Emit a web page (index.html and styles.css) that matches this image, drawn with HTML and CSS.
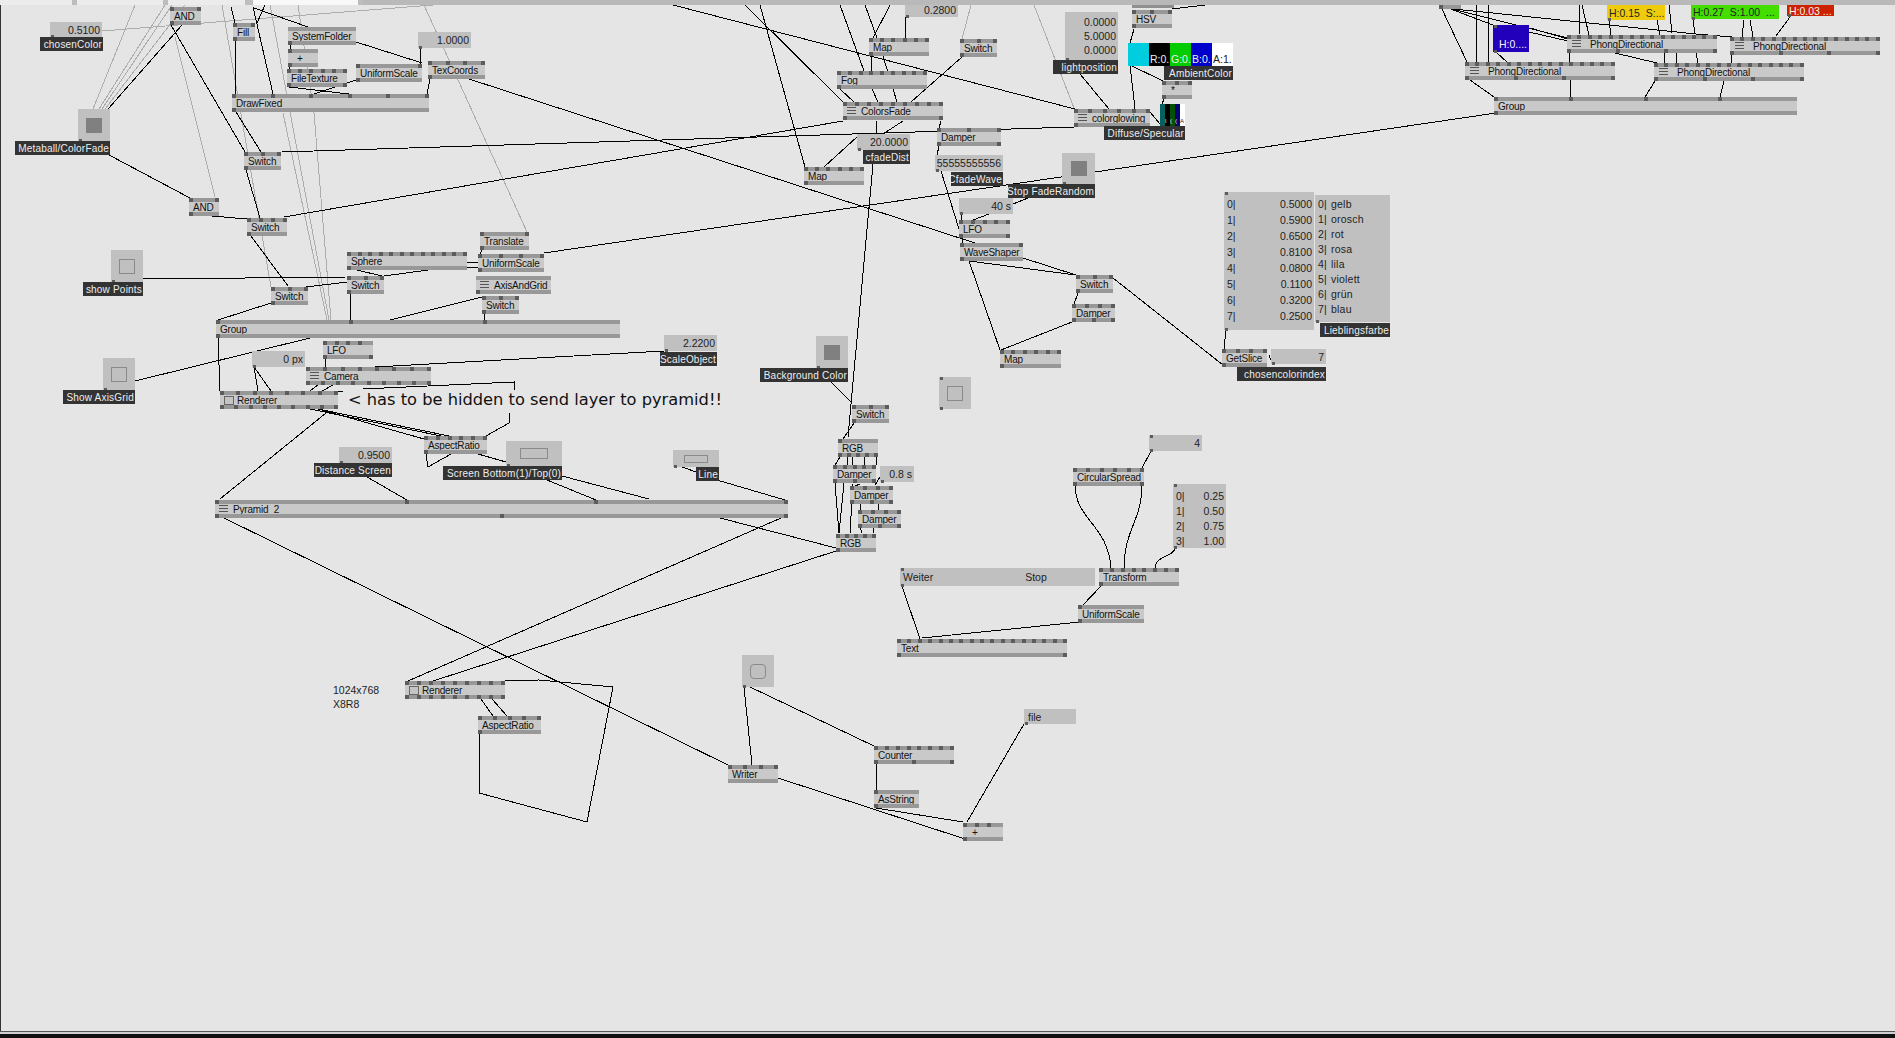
FILE: index.html
```html
<!DOCTYPE html>
<html lang="de">
<head>
<meta charset="utf-8">
<title>vvvv patch</title>
<link rel="stylesheet" href="styles.css">
</head>
<body>
<div class="window">
  <div class="strip">
    <span class="seg s1"></span><span class="tick"></span><span class="seg s2"></span><span class="tick"></span><span class="seg s3"></span><span class="tick t3"></span><span class="seg s4"></span><span class="tick"></span><span class="rest"></span>
  </div>
  <main class="patch">
    <div class="origin">
      <svg class="wires" width="1895" height="1038" viewBox="0 0 1895 1038">
        <path class="soft" d="M93 109L135 5M99 109L165 5M102 109L172 5M105 109L185 5M102 31L433 5M175 37L215 197M283 113L327 320M270 5L329 320M298 5L314 113L331 320M222 5L271 287M424 5L527 232M1034 5L1074 108M971 5L962 39"/>
        <path class="hard" d="M171 25L245 152M182 25L108 109M231 7L235 23M253 7L273 94M265 5L257 23M254 8L308 27M235 41V94M356 42L422 63M290 45V49M290 67L289 69M420 48V64M430 79L427 94M469 79L975 243M289 87L349 94M356 80L314 94M236 112L261 152M282 152L1074 127M246 170L260 218M109 155L190 198M212 216L247 219M284 217L843 121M251 236L288 286M143 279L347 277M306 287L347 282M357 270L382 276M428 270L384 276M467 263L478 262M467 268L478 267M482 250L480 254M544 253L1496 113M350 294L351 320M271 303L218 320M482 297L390 320M484 314V320M218 338L220 391M135 381L310 338M254 367L258 391M254 367L271 391M325 358V367M375 367L664 351M318 385L310 391M333 385L322 391M338 391H343M363 389L514 382V390M509 413V423L486 436M322 410L424 439M310 409L441 436M318 409L449 436M326 413L220 499M426 454L428 467L451 454M478 454L506 462M367 477L407 500M547 480L596 500M562 476L649 499M224 518L728 765M781 518L408 681M720 518L836 548M836 551L433 681M717 480L785 500M682 467L696 472M831 382L852 403M873 164L848 437M854 423L843 439M840 457L835 465M847 457V465M852 457V465M864 457V465M876 457V465M835 483L839 533M844 483L839 533M852 500L850 533M860 527L862 533M873 527V533M860 500V510M878 500V510M852 484V486M860 484L855 486M880 477L875 485M1113 278L1223 365M1226 330L1224 349M1269 355L1272 363M969 261L1000 350M1072 322L1001 350M969 261L1076 275M1023 258L1076 275M1078 293L1074 304M961 214V220M989 214L973 220M1028 198L1013 204M941 171L959 229M939 146L937 155M941 121L939 128M962 238V243M877 121L876 134M903 121L883 134M857 137L824 167M760 5L805 167M745 5L843 102M673 5L1075 109M840 5L864 71M865 5L877 38M890 5L873 38M906 17L905 38M871 56V71M883 56L897 102M840 89L854 102M872 89L878 102M962 57L911 102M1080 74L1109 109M1130 65L1135 109M1132 66L1163 81M1134 29L1130 43M1164 99L1162 104M1150 112L1160 124M1172 9L1205 5M1441 7L1467 62M1476 5V62M1488 5V62M1444 7L1568 38M1444 8L1696 34L1732 37M1448 8L1493 25M1580 5L1579 35M1582 5L1589 35M1609 20L1611 35M1657 20L1660 35M1669 5L1672 33M1693 20L1695 34M1744 20L1742 37M1750 20L1753 37M1790 17L1776 36M1530 28L1568 39M1529 32L1568 41M1497 53L1507 62M1570 53L1569 62M1615 53L1657 63M1664 53L1665 63M1676 53L1677 63M1696 53L1698 63M1732 55L1731 63M1470 80L1494 97M1570 80V97M1655 81L1645 97M1724 81L1720 97M1075 486C1076 520 1108 525 1111 568M1142 486C1142 520 1124 530 1124 568M1151 451L1142 468M1175 548C1175 556 1155 556 1155 568M902 586L920 639M1080 622L922 638M1101 586L1083 605M505 681L539 680L613 687L587 822L479 793V734M481 699L493 716M492 699L507 716M744 687L752 765M750 687L874 746M876 764V790M876 808L963 822M778 778L965 839M967 822L1024 724"/>
      </svg>

      <div class="io n-chosen">0.5100</div><div class="lab l-chosen">chosenColor</div>
      <div class="node n-and1"><div class="pins"><i></i><i></i></div><span>AND</span><div class="pins"><i></i></div></div>
      <div class="node n-fill"><div class="pins"><i></i><i></i></div><span>Fill</span><div class="pins"><i></i></div></div>
      <div class="node n-sys"><div class="pins"></div><span>SystemFolder</span><div class="pins"><i></i></div></div>
      <div class="node n-plus1"><div class="pins"><i></i></div><span class="plus">+</span><div class="pins"><i></i></div></div>
      <div class="node n-file"><div class="pins"><i></i><i></i><i></i><i></i><i></i><i></i></div><span>FileTexture</span><div class="pins"><i></i><i></i></div></div>
      <div class="node n-us1"><div class="pins"><i></i><i></i></div><span>UniformScale</span><div class="pins"><i></i></div></div>
      <div class="io n-one">1.0000</div>
      <div class="node n-tex"><div class="pins"><i></i><i></i><i></i><i></i></div><span>TexCoords</span><div class="pins"><i></i></div></div>
      <div class="node n-draw"><div class="pins"><i></i><i></i><i></i><i></i><i></i><i></i></div><span>DrawFixed</span><div class="pins"><i></i></div></div>
      <div class="io toggle n-meta"><u class="mark on"></u></div><div class="lab l-meta">Metaball/ColorFade</div>
      <div class="node n-sw1"><div class="pins"><i></i><i></i><i></i></div><span>Switch</span><div class="pins"><i></i></div></div>
      <div class="node n-and2"><div class="pins"><i></i><i></i></div><span>AND</span><div class="pins"><i></i></div></div>
      <div class="node n-sw2"><div class="pins"><i></i><i></i><i></i><i></i></div><span>Switch</span><div class="pins"><i></i></div></div>
      <div class="io toggle n-points"><u class="mark"></u></div><div class="lab l-points">show Points</div>
      <div class="node n-trans"><div class="pins"><i></i><i></i></div><span>Translate</span><div class="pins"><i></i></div></div>
      <div class="node n-sphere"><div class="pins"><i></i><i></i><i></i><i></i><i></i><i></i><i></i><i></i><i></i><i></i><i></i><i></i></div><span>Sphere</span><div class="pins"><i></i></div></div>
      <div class="node n-us2"><div class="pins"><i></i><i></i><i></i><i></i></div><span>UniformScale</span><div class="pins"><i></i></div></div>
      <div class="node n-sw3"><div class="pins"><i></i><i></i><i></i></div><span>Switch</span><div class="pins"><i></i></div></div>
      <div class="node n-axis"><div class="pins"></div><span><em class="ico"></em>AxisAndGrid</span><div class="pins"><i></i></div></div>
      <div class="node n-sw4"><div class="pins"><i></i><i></i><i></i></div><span>Switch</span><div class="pins"><i></i></div></div>
      <div class="node n-sw5"><div class="pins"><i></i><i></i><i></i></div><span>Switch</span><div class="pins"><i></i></div></div>
      <div class="node n-group1"><div class="pins"><i></i><i></i><i></i><i class="g"></i></div><span>Group</span><div class="pins"><i></i></div></div>
      <div class="node n-lfo1"><div class="pins"><i></i><i></i><i></i><i></i><i class="g"></i></div><span>LFO</span><div class="pins"><i></i><i class="g"></i><i></i></div></div>
      <div class="io n-px">0 px</div>
      <div class="node n-cam"><div class="pins"><i></i><i></i><i></i><i></i><i></i><i></i><i></i><i></i></div><span><em class="ico"></em>Camera</span><div class="pins"><i></i><i></i><i></i><i></i><i></i><i></i><i></i><i></i><i></i></div></div>
      <div class="node n-rend1"><div class="pins"><i></i><i></i><i></i><i></i><i></i><i></i><i></i><i></i></div><span><em class="box"></em>Renderer</span><div class="pins"><i></i><i></i><i></i><i></i><i></i><i></i><i></i><i></i><i></i></div></div>
      <div class="io toggle n-axisg"><u class="mark"></u></div><div class="lab l-axisg">Show AxisGrid</div>
      <p class="note">&lt; has to be hidden to send layer to pyramid!!</p>
      <div class="node n-asp1"><div class="pins"><i></i><i></i><i></i><i></i><i></i><i></i></div><span>AspectRatio</span><div class="pins"><i></i></div></div>
      <div class="io n-dist">0.9500</div><div class="lab l-dist">Distance Screen</div>
      <div class="io toggle n-screen"><u class="mark wide"></u></div><div class="lab l-screen">Screen Bottom(1)/Top(0)</div>
      <div class="node n-pyr"><div class="pins"><i></i><i></i><i></i><i></i></div><span><em class="ico"></em>Pyramid_2_</span><div class="pins"><i></i><i></i><i></i></div></div>
      <div class="node n-rend2"><div class="pins"><i></i><i></i><i></i><i></i><i></i><i></i><i></i><i></i><i></i></div><span><em class="box"></em>Renderer</span><div class="pins"><i></i><i></i><i></i><i></i><i></i><i></i><i></i><i></i><i></i></div></div>
      <p class="plain p-res">1024x768</p><p class="plain p-fmt">X8R8</p>
      <div class="node n-asp2"><div class="pins"><i></i><i></i><i></i><i></i><i></i></div><span>AspectRatio</span><div class="pins"><i></i></div></div>
      <div class="node n-writer"><div class="pins"><i></i><i></i><i></i><i></i></div><span>Writer</span><div class="pins"></div></div>
      <div class="io toggle n-round"><u class="mark round"></u></div>
      <div class="node n-counter"><div class="pins"><i></i><i></i><i></i><i></i><i></i><i></i><i></i><i></i></div><span>Counter</span><div class="pins"><i></i><i></i><i></i></div></div>
      <div class="node n-asstr"><div class="pins"><i></i><i class="g"></i></div><span>AsString</span><div class="pins"><i></i></div></div>
      <div class="node n-plus2"><div class="pins"><i></i><i></i><i></i><i class="g"></i></div><span class="plus">+</span><div class="pins"><i></i></div></div>
      <div class="node n-text"><div class="pins"><i></i><i></i><i></i><i></i><i></i><i></i><i></i><i></i><i></i><i></i><i></i><i></i><i></i><i></i><i></i><i></i><i></i></div><span>Text</span><div class="pins"><i></i><i></i></div></div>
      <div class="io left n-fileio">file</div>

      <div class="io n-22">2.2200</div><div class="lab l-22">ScaleObject</div>
      <div class="io toggle n-bg"><u class="mark on"></u></div><div class="lab l-bg">Background Color</div>
      <div class="node n-sw6"><div class="pins"><i></i><i></i><i></i></div><span>Switch</span><div class="pins"><i></i></div></div>
      <div class="node n-rgb1"><div class="pins"><i></i></div><span>RGB</span><div class="pins"><i></i><i></i><i></i><i></i><i></i></div></div>
      <div class="node n-dmp1"><div class="pins"><i></i><i></i><i></i><i></i><i></i></div><span>Damper</span><div class="pins"><i></i><i></i><i></i></div></div>
      <div class="io n-08">0.8 s</div>
      <div class="node n-dmp2"><div class="pins"><i></i><i></i><i></i><i></i></div><span>Damper</span><div class="pins"><i></i><i></i><i></i></div></div>
      <div class="node n-dmp3"><div class="pins"><i></i><i></i><i></i><i></i></div><span>Damper</span><div class="pins"><i></i><i></i><i></i></div></div>
      <div class="node n-rgb2"><div class="pins"><i></i><i></i><i></i><i></i><i></i></div><span>RGB</span><div class="pins"><i></i></div></div>
      <div class="io toggle tp n-tgl"><u class="mark"></u></div>
      <div class="io toggle n-line"><u class="mark thin"></u></div><div class="lab l-line">Line</div>
      <div class="node n-map3"><div class="pins"><i></i><i></i><i></i><i></i><i></i><i></i></div><span>Map</span><div class="pins"><i></i></div></div>
      <div class="node n-slice"><div class="pins"><i></i><i></i><i></i><i></i></div><span>GetSlice</span><div class="pins"><i></i></div></div>
      <div class="io n-7">7</div><div class="lab l-7">chosencolorindex</div>
      <div class="io tp n-4">4</div>
      <div class="node n-circ"><div class="pins"><i></i><i></i><i></i><i></i><i></i><i></i></div><span>CircularSpread</span><div class="pins"><i></i><i></i></div></div>
      <div class="io spread tp n-sp4"><div><span>0|</span><span>0.25</span></div><div><span>1|</span><span>0.50</span></div><div><span>2|</span><span>0.75</span></div><div><span>3|</span><span>1.00</span></div></div>
      <div class="io tp n-weiter"><span>Weiter</span><span class="stop">Stop</span></div>
      <div class="node n-tform"><div class="pins"><i></i><i></i><i></i><i></i><i></i><i></i><i></i><i></i></div><span>Transform</span><div class="pins"><i></i></div></div>
      <div class="node n-us3"><div class="pins"><i></i><i class="g"></i></div><span>UniformScale</span><div class="pins"><i></i></div></div>

      <div class="io n-28">0.2800</div>
      <div class="node n-map1"><div class="pins"><i></i><i></i><i></i><i></i><i></i><i></i></div><span>Map</span><div class="pins"><i></i></div></div>
      <div class="node n-sw7"><div class="pins"><i></i><i></i><i></i></div><span>Switch</span><div class="pins"><i></i></div></div>
      <div class="node n-fog"><div class="pins"><i></i><i></i><i></i><i></i><i></i><i></i><i></i><i></i><i></i></div><span>Fog</span><div class="pins"><i></i></div></div>
      <div class="node n-cf"><div class="pins"><i></i><i></i><i></i><i></i><i></i><i></i><i></i><i></i><i></i></div><span><em class="ico"></em>ColorsFade</span><div class="pins"><i></i><i></i></div></div>
      <div class="io n-20">20.0000</div><div class="lab l-20">cfadeDist</div>
      <div class="node n-dmp4"><div class="pins"><i></i><i></i><i></i></div><span>Damper</span><div class="pins"><i></i><i></i></div></div>
      <div class="io n-55">55555555556</div><div class="lab l-55">CfadeWave</div>
      <div class="node n-map2"><div class="pins"><i></i><i></i><i></i><i></i><i></i><i></i></div><span>Map</span><div class="pins"><i></i></div></div>
      <div class="io toggle n-stop"><u class="mark on"></u></div><div class="lab l-stop">Stop FadeRandom</div>
      <div class="io n-40">40 s</div>
      <div class="node n-lfo2"><div class="pins"><i></i><i></i><i></i><i></i><i></i></div><span>LFO</span><div class="pins"><i></i><i></i></div></div>
      <div class="node n-wave"><div class="pins"><i></i><i></i></div><span>WaveShaper</span><div class="pins"><i></i></div></div>
      <div class="node n-sw8"><div class="pins"><i></i><i></i><i></i></div><span>Switch</span><div class="pins"><i></i></div></div>
      <div class="node n-dmp5"><div class="pins"><i></i><i></i><i></i><i></i></div><span>Damper</span><div class="pins"><i></i><i></i><i></i></div></div>
      <div class="node n-cut"></div>
      <div class="node n-hsv"><div class="pins"><i></i><i></i><i></i></div><span>HSV</span><div class="pins"><i></i></div></div>
      <div class="io spread n-light"><div><span></span><span>0.0000</span></div><div><span></span><span>5.0000</span></div><div><span></span><span>0.0000</span></div></div><div class="lab l-light">lightposition</div>
      <div class="swatches n-amb"><b class="c-cyan"></b><b class="c-black">R:0.</b><b class="c-green">G:0.</b><b class="c-blue">B:0.</b><b class="c-white">A:1.</b></div><div class="lab l-amb">AmbientColor</div>
      <div class="node n-mul"><div class="pins"><i></i><i></i><i></i></div><span class="plus">*</span><div class="pins"><i></i></div></div>
      <div class="swatches tiny n-diff"><b class="c-teal"></b><b class="c-black">l</b><b class="c-dgreen">(</b><b class="c-dblue">(</b><b class="c-white">A</b></div>
      <div class="node n-glow"><div class="pins"><i></i><i></i><i></i><i></i><i></i><i></i></div><span><em class="ico"></em>colorglowing</span><div class="pins"><i></i></div></div>
      <div class="lab l-diff">Diffuse/Specular</div>

      <div class="node n-cut2"><div class="pins"><i></i></div></div>
      <div class="io color n-yellow">H:0.15&nbsp; S:...</div>
      <div class="io color n-lime">H:0.27&nbsp; S:1.00&nbsp; ...</div>
      <div class="io color n-red">H:0.03 ...</div>
      <div class="io color tp n-blue">H:0....</div>
      <div class="node n-ph1"><div class="pins"><i></i><i></i><i></i><i></i><i></i><i></i><i></i><i></i><i></i><i></i><i></i><i></i><i></i><i></i><i></i></div><span><em class="ico even"></em>PhongDirectional</span><div class="pins"><i></i><i></i><i></i><i></i></div></div>
      <div class="node n-ph2"><div class="pins"><i></i><i></i><i></i><i></i><i></i><i></i><i></i><i></i><i></i><i></i><i></i><i></i><i></i><i></i><i></i></div><span><em class="ico even"></em>PhongDirectional</span><div class="pins"><i></i><i></i><i></i><i></i></div></div>
      <div class="node n-ph3"><div class="pins"><i></i><i></i><i></i><i></i><i></i><i></i><i></i><i></i><i></i><i></i><i></i><i></i><i></i><i></i><i></i></div><span><em class="ico even"></em>PhongDirectional</span><div class="pins"><i></i><i></i><i></i><i></i></div></div>
      <div class="node n-ph4"><div class="pins"><i></i><i></i><i></i><i></i><i></i><i></i><i></i><i></i><i></i><i></i><i></i><i></i><i></i><i></i><i></i></div><span><em class="ico even"></em>PhongDirectional</span><div class="pins"><i></i><i></i><i></i><i></i></div></div>
      <div class="node n-group2"><div class="pins"><i></i><i></i><i></i><i></i><i class="g"></i></div><span>Group</span><div class="pins"><i></i></div></div>

      <div class="io spread tp n-vals"><div><span>0|</span><span>0.5000</span></div><div><span>1|</span><span>0.5900</span></div><div><span>2|</span><span>0.6500</span></div><div><span>3|</span><span>0.8100</span></div><div><span>4|</span><span>0.0800</span></div><div><span>5|</span><span>0.1100</span></div><div><span>6|</span><span>0.3200</span></div><div><span>7|</span><span>0.2500</span></div></div>
      <div class="io spread names n-names"><div><span>0|</span><span>gelb</span></div><div><span>1|</span><span>orosch</span></div><div><span>2|</span><span>rot</span></div><div><span>3|</span><span>rosa</span></div><div><span>4|</span><span>lila</span></div><div><span>5|</span><span>violett</span></div><div><span>6|</span><span>grün</span></div><div><span>7|</span><span>blau</span></div></div>
      <div class="lab l-names">Lieblingsfarbe</div>
    </div>
  </main>
  <div class="status"></div>
</div>
</body>
</html>
```
FILE: styles.css
```css
* { box-sizing: border-box; }
html, body { margin: 0; height: 100%; }
body { background: #111; font-family: "Liberation Sans", Arial, sans-serif; overflow: hidden; }

.window { width: 1895px; height: 1038px; display: flex; flex-direction: column; }

.strip { height: 5px; display: flex; flex: none; background: #e6e6e6; }
.seg { background: #ececec; }
.s1 { width: 72px; }
.s2 { width: 86px; }
.s3 { width: 77px; }
.s4 { width: 105px; background: #f8f8f8; }
.tick { width: 5px; background: #bdbdbd; }
.t3 { width: 8px; }
.rest { flex: 1; background: #b9b9b9; }

.patch { flex: 1; position: relative; overflow: hidden; background: #e5e5e5; border-left: 1px solid #333; }
.origin { position: absolute; left: -1px; top: -5px; width: 1895px; height: 1038px; }

.status { flex: none; height: 7px; border-top: 1px solid #555; background: linear-gradient(#d0d0d0 0 2px, #111 2px); }

.wires { position: absolute; left: 0; top: 0; }
.wires path { fill: none; stroke-width: 1; shape-rendering: crispEdges; }
.hard { stroke: #000; }
.soft { stroke: #adadad; }

/* nodes */
.node { position: absolute; height: 18px; background: #c9c9c9; display: flex; flex-direction: column; justify-content: space-between; color: #111; font-size: 10px; letter-spacing: -0.2px; }
.node > span { height: 10px; line-height: 10px; padding: 2px 0 0 4px; white-space: nowrap; display: flex; align-items: center; }
.node > span.plus { padding-left: 9px; }
.pins { height: 4px; flex: none; background: #989898; display: flex; justify-content: space-between; }
.pins i { width: 4px; height: 4px; background: #5c5c5c; display: block; }
.pins i.g { background: transparent; }
.ico { width: 9px; height: 8px; margin: -2px 5px 0 0; flex: none; background: repeating-linear-gradient(#555 0 1px, transparent 1px 3px); }
.ico.even { width: 9px; margin-right: 9px; margin-left: 1px; }
.box { width: 10px; height: 9px; margin: -2px 3px 0 0; flex: none; border: 1px solid #666; background: #c4c4c4; }

/* io boxes */
.io { position: absolute; background: #c0c0c0; color: #222; font-size: 10.5px; display: flex; align-items: center; justify-content: flex-end; padding: 0 2px; white-space: nowrap; }
.io::after { content: ""; position: absolute; left: 1px; bottom: -1px; width: 3px; height: 3px; background: #5c5c5c; }
.tp::before { content: ""; position: absolute; left: 1px; top: 0; width: 3px; height: 3px; background: #5c5c5c; }
.io.left { justify-content: flex-start; padding-left: 4px; }
.toggle { justify-content: center; padding: 0; }
.mark { display: block; width: 16px; height: 15px; border: 1px solid #8a8a8a; }
.mark.on { background: #808080; border: 0; }
.mark.wide { width: 28px; height: 11px; }
.mark.thin { width: 24px; height: 8px; }
.mark.round { border-radius: 4px; }
.spread { flex-direction: column; align-items: stretch; justify-content: flex-start; padding: 0 2px 0 3px; }
.spread > div { display: flex; justify-content: space-between; }
.spread > div > span { display: block; }
.names > div { justify-content: flex-start; gap: 4px; height: 15px; line-height: 15px; letter-spacing: 0.02em; }
.color { justify-content: flex-start; padding-left: 2px; }

.lab { position: absolute; height: 14px; line-height: 15px; background: #333; color: #eee; font-size: 10px; letter-spacing: 0.2px; display: flex; justify-content: flex-end; padding: 0 1px 0 0; white-space: nowrap; }

.note { position: absolute; margin: 0; left: 348px; top: 389px; font: 16.25px/22px "DejaVu Sans", sans-serif; color: #111; white-space: nowrap; }
.plain { position: absolute; margin: 0; left: 333px; font-size: 10.5px; line-height: 14px; color: #222; white-space: nowrap; }
.p-res { top: 683px; }
.p-fmt { top: 697px; }

/* colour strips */
.swatches { position: absolute; display: flex; }
.swatches b { flex: 1; font: 400 10.5px/14px "Liberation Sans", Arial, sans-serif; display: flex; align-items: flex-end; padding-left: 1px; color: #eee; white-space: nowrap; overflow: hidden; }
.swatches.tiny b { font-size: 6px; line-height: 10px; padding-left: 0; }
.c-cyan { background: #00cddd; }
.c-black { background: #000; }
.c-green { background: #00cc00; }
.c-blue { background: #0000cc; }
.c-white { background: #fff; color: #222 !important; }
.c-teal { background: #056060; }
.c-dgreen { background: #064f06; }
.c-dblue { background: #050570; }

/* placements: free-canvas coordinates of the patch */
.n-chosen { left: 50px; top: 22px; width: 52px; height: 15px; }
.l-chosen { left: 40px; top: 37px; width: 63px; }
.n-and1 { left: 170px; top: 7px; width: 31px; }
.n-fill { left: 233px; top: 23px; width: 22px; }
.n-sys { left: 288px; top: 27px; width: 68px; }
.n-plus1 { left: 288px; top: 49px; width: 30px; }
.n-file { left: 287px; top: 69px; width: 60px; }
.n-us1 { left: 356px; top: 64px; width: 66px; }
.n-one { left: 418px; top: 32px; width: 53px; height: 16px; }
.n-tex { left: 428px; top: 61px; width: 57px; }
.n-draw { left: 232px; top: 94px; width: 197px; }
.n-meta { left: 78px; top: 109px; width: 32px; height: 32px; }
.l-meta { left: 15px; top: 141px; width: 95px; }
.n-sw1 { left: 244px; top: 152px; width: 37px; }
.n-and2 { left: 189px; top: 198px; width: 30px; }
.n-sw2 { left: 247px; top: 218px; width: 40px; }
.n-points { left: 111px; top: 250px; width: 32px; height: 32px; }
.l-points { left: 83px; top: 282px; width: 60px; }
.n-trans { left: 480px; top: 232px; width: 49px; }
.n-sphere { left: 347px; top: 252px; width: 120px; }
.n-us2 { left: 478px; top: 254px; width: 66px; }
.n-sw3 { left: 347px; top: 276px; width: 37px; }
.n-axis { left: 476px; top: 276px; width: 75px; }
.n-sw4 { left: 271px; top: 287px; width: 37px; }
.n-sw5 { left: 482px; top: 296px; width: 37px; }
.n-group1 { left: 216px; top: 320px; width: 404px; }
.n-lfo1 { left: 323px; top: 341px; width: 50px; }
.n-px { left: 252px; top: 351px; width: 53px; height: 16px; }
.n-cam { left: 306px; top: 367px; width: 125px; }
.n-rend1 { left: 220px; top: 391px; width: 118px; }
.n-axisg { left: 103px; top: 358px; width: 32px; height: 32px; }
.l-axisg { left: 63px; top: 390px; width: 72px; }
.n-asp1 { left: 424px; top: 436px; width: 63px; }
.n-dist { left: 339px; top: 447px; width: 53px; height: 16px; }
.l-dist { left: 314px; top: 463px; width: 78px; }
.n-screen { left: 506px; top: 441px; width: 56px; height: 25px; }
.l-screen { left: 443px; top: 466px; width: 119px; }
.n-pyr { left: 215px; top: 500px; width: 573px; }
.n-rend2 { left: 405px; top: 681px; width: 100px; }
.n-asp2 { left: 478px; top: 716px; width: 63px; }
.n-writer { left: 728px; top: 765px; width: 50px; }
.n-round { left: 742px; top: 655px; width: 32px; height: 32px; }
.n-counter { left: 874px; top: 746px; width: 80px; }
.n-asstr { left: 874px; top: 790px; width: 45px; }
.n-plus2 { left: 963px; top: 823px; width: 40px; }
.n-text { left: 897px; top: 639px; width: 170px; }
.n-fileio { left: 1024px; top: 709px; width: 52px; height: 15px; }
.n-22 { left: 664px; top: 335px; width: 53px; height: 16px; }
.l-22 { left: 660px; top: 352px; width: 57px; }
.n-bg { left: 816px; top: 336px; width: 32px; height: 32px; }
.l-bg { left: 760px; top: 368px; width: 88px; }
.n-sw6 { left: 852px; top: 405px; width: 37px; }
.n-rgb1 { left: 838px; top: 439px; width: 40px; }
.n-dmp1 { left: 833px; top: 465px; width: 43px; }
.n-08 { left: 880px; top: 466px; width: 34px; height: 16px; }
.n-dmp2 { left: 850px; top: 486px; width: 43px; }
.n-dmp3 { left: 858px; top: 510px; width: 43px; }
.n-rgb2 { left: 836px; top: 534px; width: 40px; }
.n-tgl { left: 939px; top: 377px; width: 32px; height: 32px; }
.n-line { left: 673px; top: 450px; width: 46px; height: 17px; }
.l-line { left: 696px; top: 467px; width: 23px; }
.n-map3 { left: 1000px; top: 350px; width: 61px; }
.n-slice { left: 1222px; top: 349px; width: 45px; }
.n-7 { left: 1271px; top: 349px; width: 55px; height: 15px; }
.l-7 { left: 1237px; top: 367px; width: 89px; }
.n-4 { left: 1149px; top: 435px; width: 53px; height: 16px; }
.n-circ { left: 1073px; top: 468px; width: 71px; }
.n-sp4 { left: 1173px; top: 484px; width: 53px; height: 64px; padding-top: 5px; }
.n-sp4 > div { height: 15px; line-height: 15px; }
.n-weiter { left: 900px; top: 568px; width: 195px; height: 18px; justify-content: flex-start; padding-left: 3px; }
.stop { margin-left: 92px; }
.n-tform { left: 1099px; top: 568px; width: 80px; }
.n-us3 { left: 1078px; top: 605px; width: 66px; }
.n-28 { left: 905px; top: 3px; width: 53px; height: 14px; }
.n-map1 { left: 869px; top: 38px; width: 60px; }
.n-sw7 { left: 960px; top: 39px; width: 37px; }
.n-fog { left: 837px; top: 71px; width: 90px; }
.n-cf { left: 843px; top: 102px; width: 100px; }
.n-20 { left: 857px; top: 134px; width: 53px; height: 16px; }
.l-20 { left: 863px; top: 150px; width: 47px; }
.n-dmp4 { left: 937px; top: 128px; width: 64px; }
.n-55 { left: 935px; top: 155px; width: 68px; height: 16px; }
.l-55 { left: 951px; top: 172px; width: 52px; }
.n-map2 { left: 804px; top: 167px; width: 60px; }
.n-stop { left: 1062px; top: 153px; width: 33px; height: 31px; }
.l-stop { left: 1008px; top: 184px; width: 87px; }
.n-40 { left: 959px; top: 198px; width: 54px; height: 16px; }
.n-lfo2 { left: 959px; top: 220px; width: 51px; }
.n-wave { left: 960px; top: 243px; width: 63px; }
.n-sw8 { left: 1076px; top: 275px; width: 37px; }
.n-dmp5 { left: 1072px; top: 304px; width: 43px; }
.n-cut { left: 1132px; top: 5px; width: 42px; height: 3px; background: #8f8f8f; }
.n-hsv { left: 1132px; top: 10px; width: 40px; }
.n-light { left: 1065px; top: 12px; width: 53px; height: 48px; padding-top: 3px; }
.n-light > div { height: 14px; line-height: 14px; }
.l-light { left: 1053px; top: 60px; width: 65px; }
.n-amb { left: 1128px; top: 43px; width: 105px; height: 23px; }
.l-amb { left: 1164px; top: 66px; width: 69px; }
.n-mul { left: 1162px; top: 81px; width: 30px; }
.n-diff { left: 1160px; top: 104px; width: 25px; height: 22px; }
.n-glow { left: 1074px; top: 109px; width: 76px; }
.l-diff { left: 1104px; top: 126px; width: 81px; }
.n-cut2 { left: 1439px; top: 5px; width: 22px; height: 4px; background: #989898; }
.n-yellow { left: 1607px; top: 5px; width: 58px; height: 15px; background: #eecc0c; }
.n-lime { left: 1691px; top: 5px; width: 88px; height: 14px; background: #44dd00; }
.n-red { left: 1787px; top: 5px; width: 47px; height: 11px; background: #cc2200; color: #f4f4f4; }
.n-blue { left: 1493px; top: 25px; width: 36px; height: 27px; background: #2200bb; color: #f4f4f4; align-items: flex-end; padding: 0 0 2px 6px; }
.n-ph1 { left: 1567px; top: 35px; width: 150px; }
.n-ph2 { left: 1730px; top: 37px; width: 150px; }
.n-ph3 { left: 1465px; top: 62px; width: 150px; }
.n-ph4 { left: 1654px; top: 63px; width: 150px; }
.n-group2 { left: 1494px; top: 97px; width: 303px; }
.n-vals { left: 1224px; top: 192px; width: 90px; height: 138px; padding-top: 4px; }
.n-vals > div { height: 16px; line-height: 16px; }
.n-names { left: 1315px; top: 195px; width: 75px; height: 127px; padding-top: 2px; }
.l-names { left: 1320px; top: 323px; width: 70px; }
```
